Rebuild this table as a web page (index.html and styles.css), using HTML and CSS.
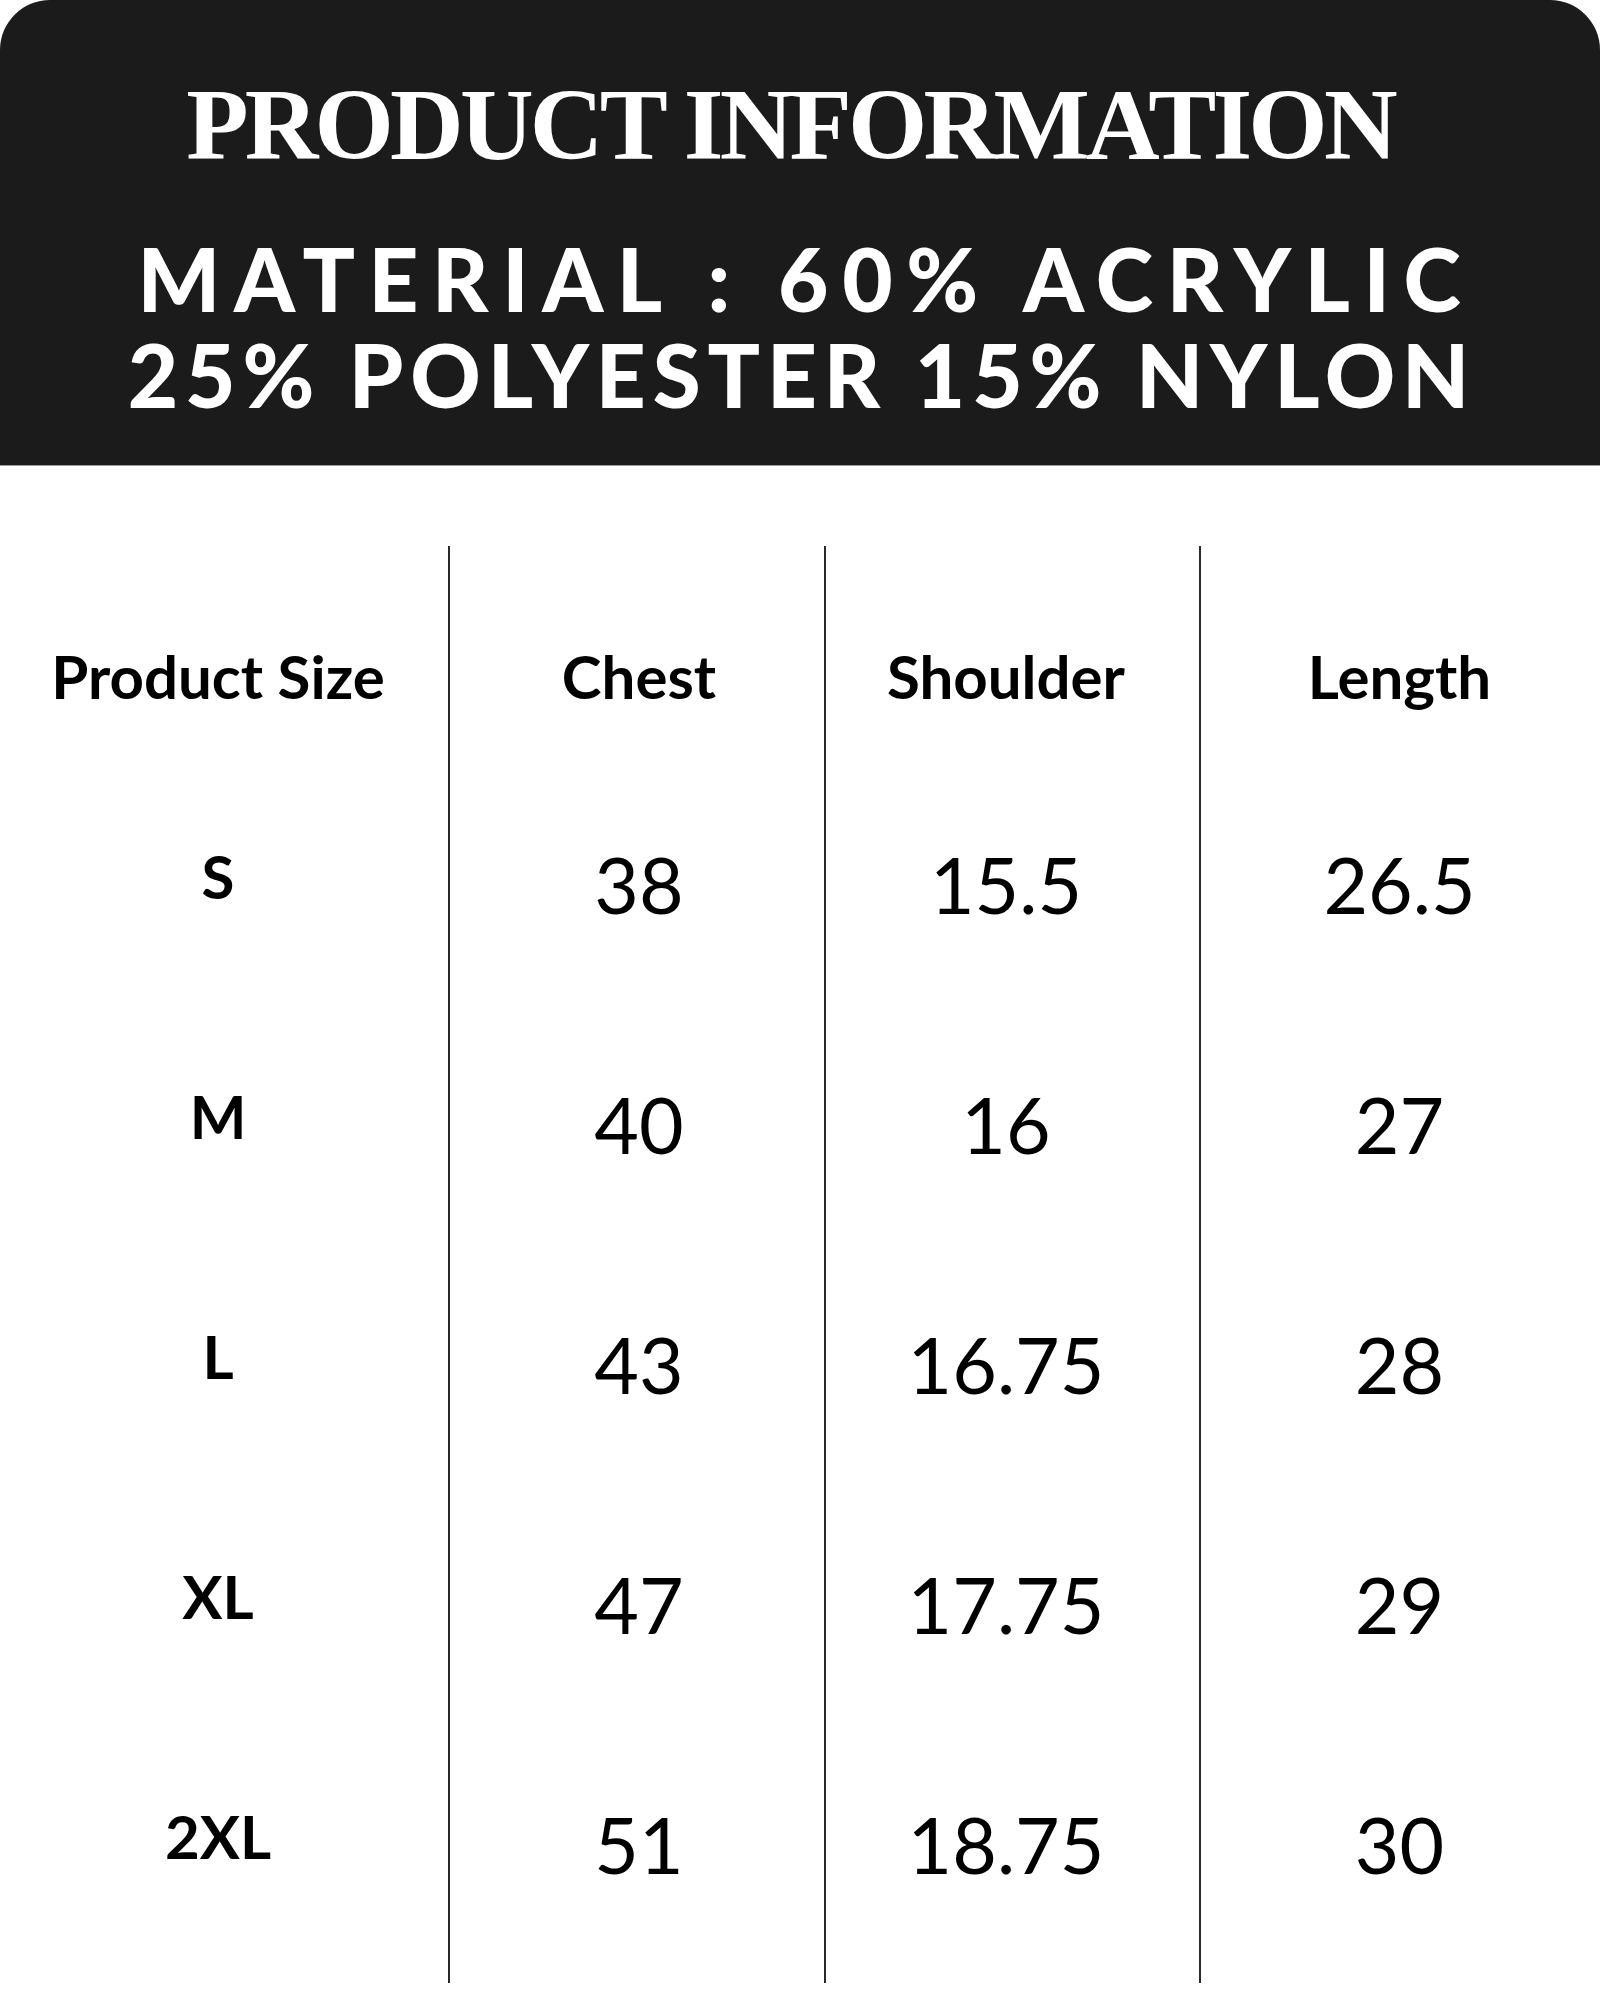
FILE: index.html
```html
<!DOCTYPE html>
<html lang="en">
<head>
<meta charset="utf-8">
<title>Product Information</title>
<link rel="stylesheet" href="styles.css">
</head>
<body>
<div class="sheet">
  <header class="banner">
    <h1 class="title">PRODUCT INFORMATION</h1>
    <p class="material">
      <span class="line line-one">MATERIAL : 60% ACRYLIC</span>
      <span class="line line-two">25% POLYESTER 15% NYLON</span>
    </p>
  </header>
  <div class="size-table">
    <div class="cell c1 head">Product Size</div>
    <div class="cell c2 head sep">Chest</div>
    <div class="cell c3 head sep">Shoulder</div>
    <div class="cell c4 head sep">Length</div>

    <div class="cell c1 size">S</div>
    <div class="cell c2 num sep">38</div>
    <div class="cell c3 num sep">15.5</div>
    <div class="cell c4 num sep">26.5</div>

    <div class="cell c1 size">M</div>
    <div class="cell c2 num sep">40</div>
    <div class="cell c3 num sep">16</div>
    <div class="cell c4 num sep">27</div>

    <div class="cell c1 size">L</div>
    <div class="cell c2 num sep">43</div>
    <div class="cell c3 num sep">16.75</div>
    <div class="cell c4 num sep">28</div>

    <div class="cell c1 size">XL</div>
    <div class="cell c2 num sep">47</div>
    <div class="cell c3 num sep">17.75</div>
    <div class="cell c4 num sep">29</div>

    <div class="cell c1 size last">2XL</div>
    <div class="cell c2 num sep last">51</div>
    <div class="cell c3 num sep last">18.75</div>
    <div class="cell c4 num sep last">30</div>
  </div>
</div>
</body>
</html>
```

FILE: styles.css
```css
html, body {
  margin: 0;
  padding: 0;
  background: #ffffff;
}

body {
  font-family: "Lato", "Open Sans", sans-serif;
  color: #000;
}

.sheet {
  width: 1600px;
  height: 2000px;
  overflow: hidden;
}

.banner {
  height: 466px;
  box-sizing: border-box;
  background: #1b1b1b;
  border-radius: 50px 50px 0 0;
  border-bottom: 1px solid #9a9a9a;
  padding-top: 74px;
  color: #fff;
  text-align: center;
}

.title {
  margin: 0;
  font-family: "Liberation Serif", "Times New Roman", serif;
  font-weight: 700;
  font-size: 102px;
  line-height: 1;
  letter-spacing: -3.8px;
  padding-right: 20px;
}

.material {
  margin: 55px 0 0;
  font-family: "Lato", "Open Sans", sans-serif;
  font-weight: 900;
  font-size: 87px;
  line-height: 95.5px;
}

.line {
  display: block;
  white-space: nowrap;
}

.line-one {
  letter-spacing: 13.6px;
  padding-left: 12px;
}

.line-two {
  letter-spacing: 6.9px;
  padding-left: 4px;
}

.size-table {
  margin-top: 80px;
  display: grid;
  grid-template-columns: 448px 376px 375px 401px;
  grid-template-rows: 200px repeat(4, 240px) 277px;
}

.cell {
  display: flex;
  justify-content: center;
  align-items: flex-start;
  padding-top: 100px;
  line-height: 1;
  white-space: nowrap;
}

.c1 {
  padding-right: 12px;
}

.c2 {
  padding-left: 4px;
}

.c3 {
  padding-right: 13px;
}

.c4 {
  padding-right: 2px;
}

.sep {
  border-left: 2px solid #2a2a2a;
}

.head {
  font-weight: 700;
  font-size: 60px;
}

.size {
  font-weight: 700;
  font-size: 60px;
}

.num {
  font-weight: 400;
  font-size: 77px;
}

.last {
  padding-bottom: 37px;
}
```
